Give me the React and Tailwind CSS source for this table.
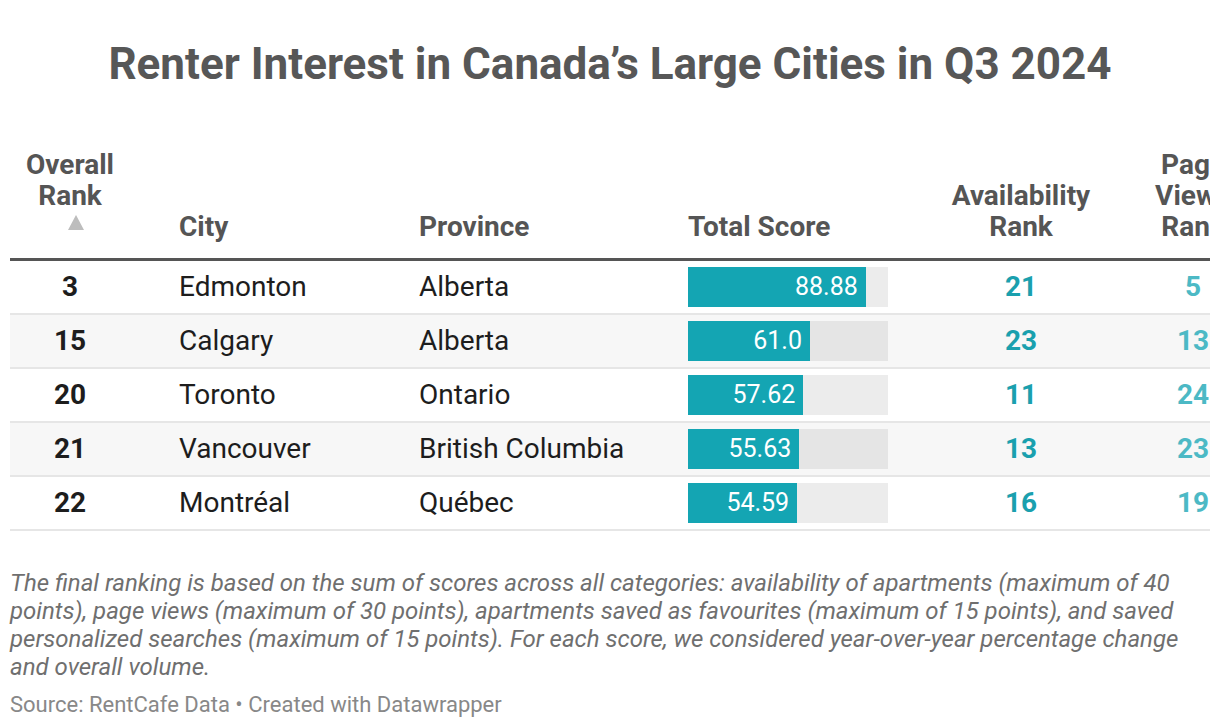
const rows = [
  { rank: 3, city: "Edmonton", province: "Alberta", score: "88.88", avail: 21, views: 5 },
  { rank: 15, city: "Calgary", province: "Alberta", score: "61.0", avail: 23, views: 13 },
  { rank: 20, city: "Toronto", province: "Ontario", score: "57.62", avail: 11, views: 24 },
  { rank: 21, city: "Vancouver", province: "British Columbia", score: "55.63", avail: 13, views: 23 },
  { rank: 22, city: "Montréal", province: "Québec", score: "54.59", avail: 16, views: 19 },
];

const cols = "grid grid-cols-[120px_279px_259px_230px_246px_98px]";

export default function App() {
  return (
    <div className="w-[1220px] h-[728px] overflow-hidden bg-white px-[10px] font-['Roboto',sans-serif]">
      <h1 className="pt-[37px] text-center text-[44px] leading-[54px] font-bold text-[#575757]">
        Renter Interest in Canada’s Large Cities in Q3 2024
      </h1>

      <div className="mt-[58px] overflow-hidden">
        <div className="w-[1232px]">
          {/* header */}
          <div className={`${cols} items-end border-b-[3px] border-[#555] pb-[16px] text-[28px] leading-[31px] font-bold text-[#555]`}>
            <div className="flex flex-col items-center">
              <span>Overall</span>
              <span>Rank</span>
              <div className="h-[31px] pt-[4px] pl-[11px]">
                <div className="h-0 w-0 border-x-[8px] border-b-[15px] border-x-transparent border-b-[#bdbdbd]" />
              </div>
            </div>
            <div className="pl-[49px]">City</div>
            <div className="pl-[10px]">Province</div>
            <div className="pl-[20px]">Total Score</div>
            <div className="text-center">
              Availability
              <br />
              Rank
            </div>
            <div className="text-center">
              Page
              <br />
              Views
              <br />
              Rank
            </div>
          </div>

          {/* rows */}
          {rows.map((r, i) => {
            const odd = i % 2 === 1;
            return (
              <div
                key={r.city}
                className={`${cols} h-[54px] items-center border-b-2 border-[#e6e6e6] text-[28px] text-[#1d1d1d] ${odd ? "bg-[#f7f7f7]" : "bg-white"}`}
              >
                <div className="text-center font-bold">{r.rank}</div>
                <div className="pl-[49px]">{r.city}</div>
                <div className="pl-[10px]">{r.province}</div>
                <div className="pl-[20px]">
                  <div className={`h-[40px] w-[200px] ${odd ? "bg-[#e5e5e5]" : "bg-[#ececec]"}`}>
                    <div
                      className="flex h-full items-center justify-end bg-[#14a5b3] pr-[8px] text-[25px] text-white"
                      style={{ width: `${parseFloat(r.score) * 2}px` }}
                    >
                      {r.score}
                    </div>
                  </div>
                </div>
                <div className="text-center font-bold text-[#1aa0ae]">{r.avail}</div>
                <div className="text-center font-bold text-[#4cb9c5]">{r.views}</div>
              </div>
            );
          })}
        </div>
      </div>

      <p className="mt-[38px] text-[24px] leading-[28px] italic text-[#6f6f6f]">
        The final ranking is based on the sum of scores across all categories: availability of apartments (maximum of 40
        points), page views (maximum of 30 points), apartments saved as favourites (maximum of 15 points), and saved
        personalized searches (maximum of 15 points). For each score, we considered year-over-year percentage change
        and overall volume.
      </p>
      <p className="mt-[10px] text-[22px] leading-[28px] text-[#888]">Source: RentCafe Data • Created with Datawrapper</p>
    </div>
  );
}
